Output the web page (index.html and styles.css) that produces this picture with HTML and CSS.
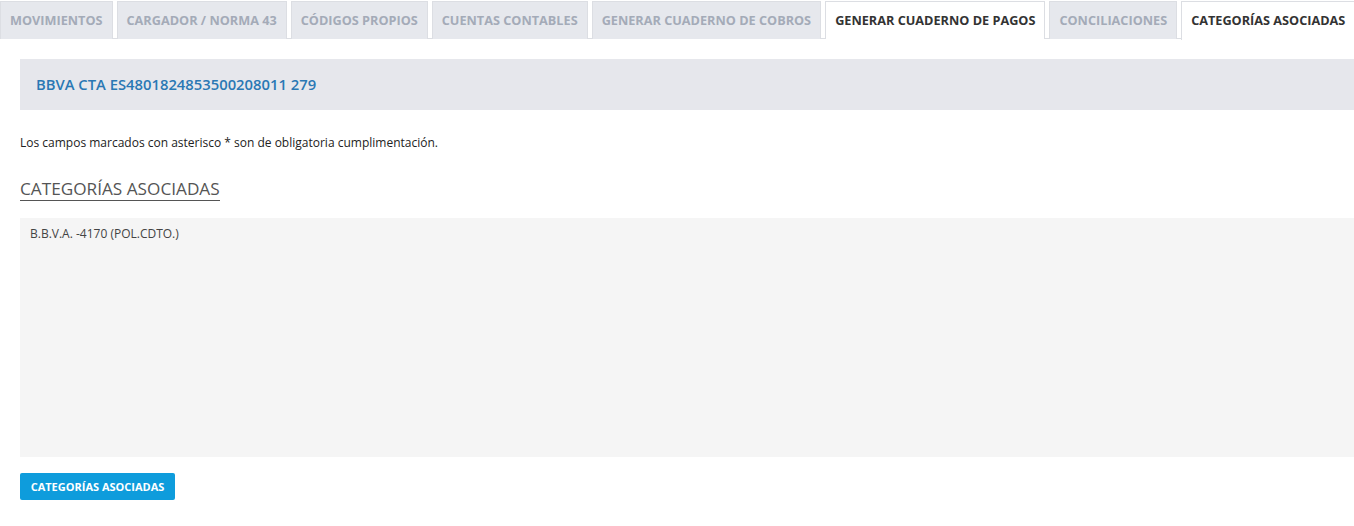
FILE: index.html
```html
<!DOCTYPE html>
<html lang="es">
<head>
<meta charset="utf-8">
<title>Categorías asociadas</title>
<link rel="stylesheet" href="styles.css">
</head>
<body>
<nav class="tabs">
  <a class="tab">MOVIMIENTOS</a>
  <a class="tab">CARGADOR / NORMA 43</a>
  <a class="tab">CÓDIGOS PROPIOS</a>
  <a class="tab">CUENTAS CONTABLES</a>
  <a class="tab">GENERAR CUADERNO DE COBROS</a>
  <a class="tab tab-white">GENERAR CUADERNO DE PAGOS</a>
  <a class="tab">CONCILIACIONES</a>
  <a class="tab tab-active">CATEGORÍAS ASOCIADAS</a>
</nav>
<main class="content">
  <div class="account">BBVA CTA ES4801824853500208011 279</div>
  <p class="note">Los campos marcados con asterisco * son de obligatoria cumplimentación.</p>
  <h2 class="section-title">CATEGORÍAS ASOCIADAS</h2>
  <div class="list-box">B.B.V.A. -4170 (POL.CDTO.)</div>
  <button class="btn">CATEGORÍAS ASOCIADAS</button>
</main>
</body>
</html>
```
FILE: styles.css
```css
* { box-sizing: border-box; }
html, body { margin: 0; padding: 0; background: #fff; }
body { font-family: "Open Sans", "Liberation Sans", sans-serif; color: #333; }

.tabs {
  display: flex;
  gap: 4px;
  padding-top: 1px;
  border-bottom: 1px solid #dcdee3;
  height: 39px;
}
.tab {
  display: flex;
  align-items: center;
  height: 38px;
  padding: 0 9px 2px;
  font-size: 12.7px;
  font-weight: 700;
  color: #a4abb8;
  background: #e6e8ed;
  border: 1px solid #dcdee3;
  border-bottom: none;
  white-space: nowrap;
}
.tab-white { background: #fff; color: #333; }
.tab-active { background: #fff; color: #333; height: 39px; margin-bottom: -1px; }

.content { padding-left: 20px; }

.account {
  margin-top: 20px;
  height: 51px;
  background: #e6e7ec;
  color: #2a78b4;
  font-size: 14.8px;
  font-weight: 600;
  padding: 15px 16px 0;
}
.note {
  margin: 24px 0 0;
  font-size: 12px;
  line-height: 17px;
  color: #222;
}
.section-title {
  display: inline-block;
  margin: 27px 0 0;
  font-size: 17.2px;
  font-weight: 400;
  color: #555;
  line-height: 22px;
  border-bottom: 1px solid #555;
}
.list-box {
  margin-top: 17px;
  height: 239px;
  background: #f5f5f5;
  padding: 7px 10px;
  font-size: 12px;
  line-height: 17px;
  color: #444;
}
.btn {
  display: block;
  margin-top: 16px;
  width: 155px;
  height: 27px;
  background: #0e9cdc;
  color: #fff;
  border: none;
  border-radius: 2px;
  font-family: "Open Sans", "Liberation Sans", sans-serif;
  font-size: 11px;
  font-weight: 700;
  padding: 0;
}
```
